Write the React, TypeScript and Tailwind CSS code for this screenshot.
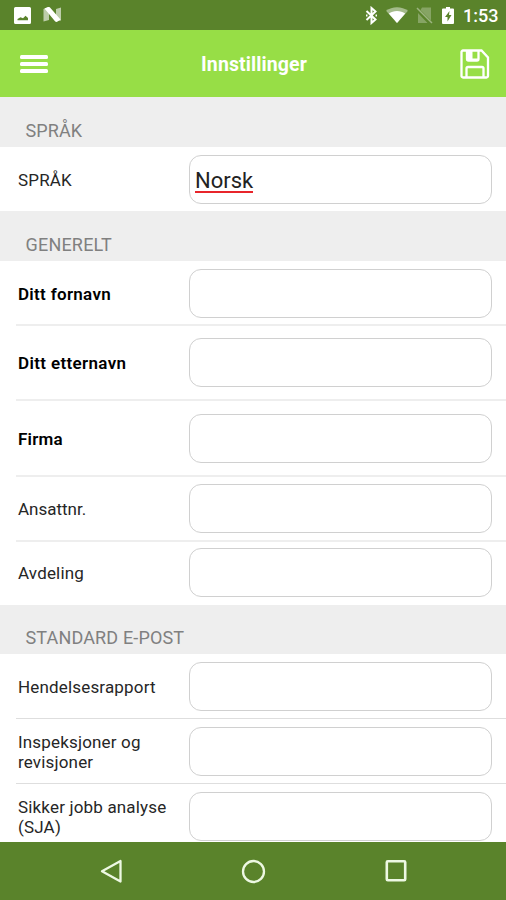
import React from "react";

type RowProps = {
  label: string;
  value?: string;
  bold?: boolean;
  divider?: string;
  size: string;
  tracking?: string;
};

function Section({ title, size, tracking }: { title: string; size: string; tracking: string }) {
  return (
    <div className={`${size} shrink-0 bg-[#eeeeee] pl-[25.5px] text-[18px] leading-[22px] text-[#808080]`}>
      <span className={`inline-block whitespace-nowrap ${tracking}`}>{title}</span>
    </div>
  );
}

function Row({ label, value, bold, divider = "", size, tracking = "tracking-[0.17px]" }: RowProps) {
  return (
    <div className={`${size} shrink-0 pl-4`}>
      <div className={`flex h-full items-start ${divider}`}>
        <div
          className={`flex h-[49px] w-[173px] shrink-0 items-center pl-[2px] text-[17px] leading-5 whitespace-pre-line ${
            bold ? "font-semibold text-black" : "text-[#262626]"
          } ${tracking}`}
        >
          {label}
        </div>
        <div className="mr-[14px] flex h-[49px] flex-1 items-center rounded-[12px] border-[1.5px] border-[#d0d0d0] bg-white pl-[5px]">
          {value && (
            <span className="mt-[2px] h-[24px] border-b-2 border-[#e8252b] text-[22px] leading-[24px] text-[#222]">
              {value}
            </span>
          )}
        </div>
      </div>
    </div>
  );
}

function StatusBar() {
  return (
    <div className="flex h-[30px] shrink-0 items-center bg-[#5a832b]">
      <svg className="ml-[14px] h-[17px] w-[17px]" viewBox="0 0 17 17">
        <path fill="#fff" fillRule="evenodd" d="M1.5 0h14A1.5 1.5 0 0 1 17 1.500v14a1.500 1.500 0 0 1-1.500 1.500h-14A1.500 1.500 0 0 1 0 15.500v-14A1.500 1.500 0 0 1 1.500 0ZM3.500 13.200h10.500V11L11.500 8.800 9 11.200 6.500 10.200 3.500 12Z" />
      </svg>
      <svg className="ml-3 h-4 w-[19px]" viewBox="0 0 19 16">
        <path fill="#fff" opacity=".6" d="M0.500 2 6 0v13l-5.500 1.500ZM13 2l5-1.500v13l-5 1Z" />
        <path fill="#fff" d="M1.500 1.500 5 0c1-.3 1.500 0 2 .6L17.500 12.500 14.500 14.600c-1 .6-1.800.4-2.500-.4Z" />
      </svg>
      <div className="flex-1" />
      <svg className="h-[19px] w-[13px]" viewBox="0 0 13 19" fill="none" stroke="#fff" strokeWidth="2">
        <path d="m1.500 5 9 8.500-4 3.500V2l4 3.500-9 8.500" />
        <path d="M1 9.500h1.500M10.500 9.500H12" />
      </svg>
      <svg className="ml-[8px] h-4 w-[22px]" viewBox="0 0 22 16">
        <path fill="#fff" opacity=".45" d="M0 3.800C6-1 16-1 22 3.800L11 16Z" />
        <path fill="#fff" d="M2.800 6.500c4.500-3.500 11.900-3.500 16.400 0L11 16Z" />
      </svg>
      <svg className="ml-[8px] h-[17px] w-[17px]" viewBox="0 0 17 17">
        <path fill="#fff" opacity=".27" d="M6 0.500h9v13L4.500 3ZM2 6l9.500 10H2Z" />
        <path stroke="#fff" opacity=".4" strokeWidth="1.500" d="m1 1 15 15" />
      </svg>
      <svg className="ml-[9px] h-[17px] w-[12px]" viewBox="0 0 12 17">
        <path fill="#fff" fillRule="evenodd" d="M4 0h4v1.500h3a1 1 0 0 1 1 1V16a1 1 0 0 1-1 1H1a1 1 0 0 1-1-1V2.500a1 1 0 0 1 1-1h3ZM7.500 4 3 10h2.500v4.500L9.500 8H7Z" />
      </svg>
      <span className="mt-[2px] mr-[9px] ml-[9px] w-[34px] text-[18px] leading-5 font-medium whitespace-nowrap text-white">
        1:53
      </span>
    </div>
  );
}

function Header() {
  return (
    <div className="flex h-[67px] shrink-0 items-center justify-between bg-[#97de46] pr-4 pl-5">
      <div className="mt-px flex w-[28px] flex-col gap-[3px]">
        <div className="h-1 rounded-[1.500px] bg-white" />
        <div className="h-1 rounded-[1.500px] bg-white" />
        <div className="h-1 rounded-[1.500px] bg-white" />
      </div>
      <h1 className="mt-[3px] text-[19.5px] leading-7 font-bold tracking-[0.1px] text-white">Innstillinger</h1>
      <svg className="h-[30px] w-[30px]" viewBox="0 0 30 30" fill="none" stroke="#fff" strokeWidth="2.300">
        <path d="M3 1.500h18.500L28 8.500V27a1.500 1.500 0 0 1-1.500 1.500H3A1.500 1.500 0 0 1 1.500 27V3A1.500 1.500 0 0 1 3 1.500Z" />
        <path d="M6.500 28V19.500A1.500 1.500 0 0 1 8 18h14a1.500 1.500 0 0 1 1.500 1.500V28M7 2v8a1.500 1.500 0 0 0 1.500 1.500H17a1.500 1.500 0 0 0 1.500-1.500V2" />
        <path fill="#fff" stroke="none" d="M7 2h5.500v9H7ZM12 9.500h6v2h-6Z" />
      </svg>
    </div>
  );
}

function NavBar() {
  return (
    <div className="flex h-[58px] shrink-0 items-center bg-[#5a832b] pl-[100px]">
      <svg className="h-6 w-6" viewBox="0 0 24 24" fill="none" stroke="#edf8e3" strokeWidth="2.300" strokeLinejoin="round">
        <path d="M20.500 2v20.500L2 12.200Z" />
      </svg>
      <svg className="ml-[117px] h-[25px] w-[25px]" viewBox="0 0 25 25" fill="none" stroke="#edf8e3" strokeWidth="2.300">
        <circle cx="12.500" cy="12.500" r="10.500" />
      </svg>
      <svg className="ml-[118px] h-[24px] w-[24px]" viewBox="0 0 24 24" fill="none" stroke="#edf8e3" strokeWidth="2.600">
        <rect x="2.800" y="2.300" width="18.400" height="18.900" rx="1" />
      </svg>
    </div>
  );
}

const THICK = "border-b-2 border-[#eeeeee]";
const THIN = "border-b border-[#dedede]";

export default function App() {
  return (
    <div className="flex h-[900px] w-[506px] flex-col overflow-hidden bg-white font-[Roboto,sans-serif]">
      <StatusBar />
      <Header />
      <main className="flex h-[745px] shrink-0 flex-col overflow-hidden">
        <Section title="SPRÅK" size="h-[50px] pt-[23px]" tracking="tracking-[0.1px]" />
        <Row label="SPRÅK" value="Norsk" size="h-[64px] pt-[8px]" />
        <Section title="GENERELT" size="h-[50px] pt-[23px]" tracking="tracking-[0.2px]" />
        <Row label="Ditt fornavn" bold divider={THICK} size="h-[65px] pt-[8px]" tracking="tracking-[0.3px]" />
        <Row label="Ditt etternavn" bold divider={THICK} size="h-[75px] pt-[12px]" tracking="tracking-[0.35px]" />
        <Row label="Firma" bold divider={THICK} size="h-[76px] pt-[13px]" tracking="tracking-[0.2px]" />
        <Row label="Ansattnr." divider={THICK} size="h-[65px] pt-[7px]" tracking="tracking-[0px]" />
        <Row label="Avdeling" size="h-[63px] pt-[6px]" />
        <Section title="STANDARD E-POST" size="h-[49px] pt-[22px]" tracking="tracking-[0.15px]" />
        <Row label="Hendelsesrapport" divider={THIN} size="h-[65px] pt-[8px]" />
        <Row label={"Inspeksjoner og\nrevisjoner"} divider={THIN} size="h-[65px] pt-[8px]" />
        <Row label={"Sikker jobb analyse\n(SJA)"} size="h-[58px] pt-[8px]" />
      </main>
      <NavBar />
    </div>
  );
}
